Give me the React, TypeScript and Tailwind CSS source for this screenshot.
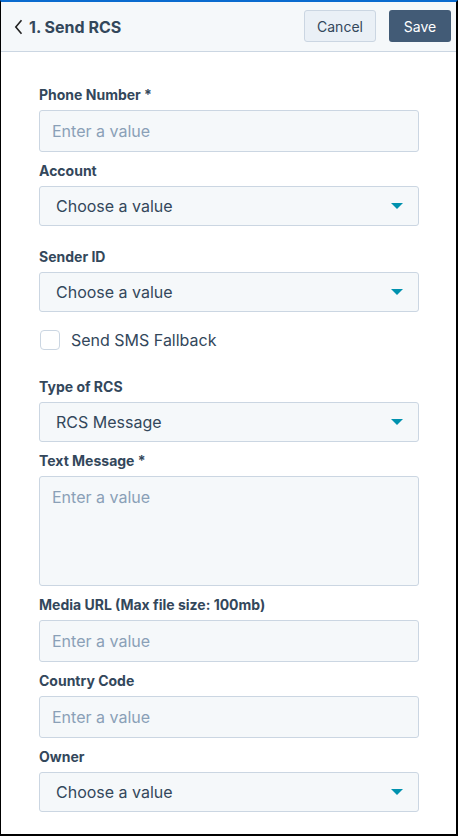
import { useState } from "react";

const font = { fontFamily: "Inter, 'Noto Sans', sans-serif" };

const Label = ({ text, className = "" }: { text: string; className?: string }) => (
  <div className={`text-[14px] leading-[20px] font-bold text-[#33475b] ${className}`}>{text}</div>
);

const TextInput = ({ className = "" }: { className?: string }) => (
  <input
    type="text"
    placeholder="Enter a value"
    className={`w-[380px] h-[42px] rounded-[3px] border border-[#cbd6e2] bg-[#f5f8fa] px-[12px] text-[16px] text-[#33475b] placeholder:text-[#8aa0b7] outline-none ${className}`}
  />
);

const Select = ({ value, className = "" }: { value: string; className?: string }) => (
  <div
    className={`w-[380px] h-[40px] rounded-[3px] border border-[#cbd6e2] bg-[#f5f8fa] pl-[16px] pr-[15px] flex items-center justify-between text-[16px] text-[#33475b] ${className}`}
  >
    <span>{value}</span>
    <svg width="12" height="6" viewBox="0 0 12 6">
      <path d="M0 0 H12 L6 6 Z" fill="#0091ae" />
    </svg>
  </div>
);

const App = () => {
  const [fallback, setFallback] = useState(false);

  return (
    <div
      style={font}
      className="w-[458px] h-[836px] bg-white border-t-2 border-t-[#0a6bcf] border-l border-l-black border-r-2 border-r-black border-b-2 border-b-black flex flex-col overflow-hidden"
    >
      {/* header */}
      <div className="h-[50px] shrink-0 bg-[#f5f8fa] border-b border-[#cbd6e2] flex items-center pl-[13px] pr-[5px]">
        <svg width="10" height="16" viewBox="0 0 10 16" className="mr-[5px]">
          <path d="M7.5 1.2 L1.8 8 L7.5 14.8" fill="none" stroke="#222" strokeWidth="1.6" />
        </svg>
        <div className="text-[16px] font-bold text-[#33475b]">1. Send RCS</div>
        <div className="ml-auto flex gap-[13px] mb-[1px]">
          <button className="w-[72px] h-[32px] rounded-[3px] border border-[#cbd6e2] bg-[#eaf0f6] text-[14px] text-[#33475b]">
            Cancel
          </button>
          <button className="w-[62px] h-[32px] rounded-[3px] bg-[#425b76] text-[14px] text-white">Save</button>
        </div>
      </div>

      {/* form */}
      <div className="flex flex-col pl-[38px] pt-[33px]">
        <Label text="Phone Number *" />
        <TextInput className="mt-[5px]" />

        <Label text="Account" className="mt-[9px]" />
        <Select value="Choose a value" className="mt-[5px]" />

        <Label text="Sender ID" className="mt-[21px]" />
        <Select value="Choose a value" className="mt-[5px]" />

        <label className="mt-[18px] h-[20px] flex items-center gap-[11px] cursor-pointer">
          <input
            type="checkbox"
            checked={fallback}
            onChange={(e) => setFallback(e.target.checked)}
            className="appearance-none w-[20px] h-[20px] ml-[1px] rounded-[4px] border border-[#cbd6e2] bg-white checked:bg-[#425b76]"
          />
          <span className="text-[16px] leading-[20px] text-[#33475b]">Send SMS Fallback</span>
        </label>

        <Label text="Type of RCS" className="mt-[27px]" />
        <Select value="RCS Message" className="mt-[5px]" />

        <Label text="Text Message *" className="mt-[9px]" />
        <textarea
          placeholder="Enter a value"
          className="mt-[5px] w-[380px] h-[110px] resize-none rounded-[3px] border border-[#cbd6e2] bg-[#f5f8fa] px-[12px] pt-[10px] text-[16px] leading-[20px] text-[#33475b] placeholder:text-[#8aa0b7] outline-none"
        />

        <Label text="Media URL (Max file size: 100mb)" className="mt-[9px]" />
        <TextInput className="mt-[5px]" />

        <Label text="Country Code" className="mt-[9px]" />
        <TextInput className="mt-[5px]" />

        <Label text="Owner" className="mt-[9px]" />
        <Select value="Choose a value" className="mt-[5px]" />
      </div>
    </div>
  );
};

export default App;
